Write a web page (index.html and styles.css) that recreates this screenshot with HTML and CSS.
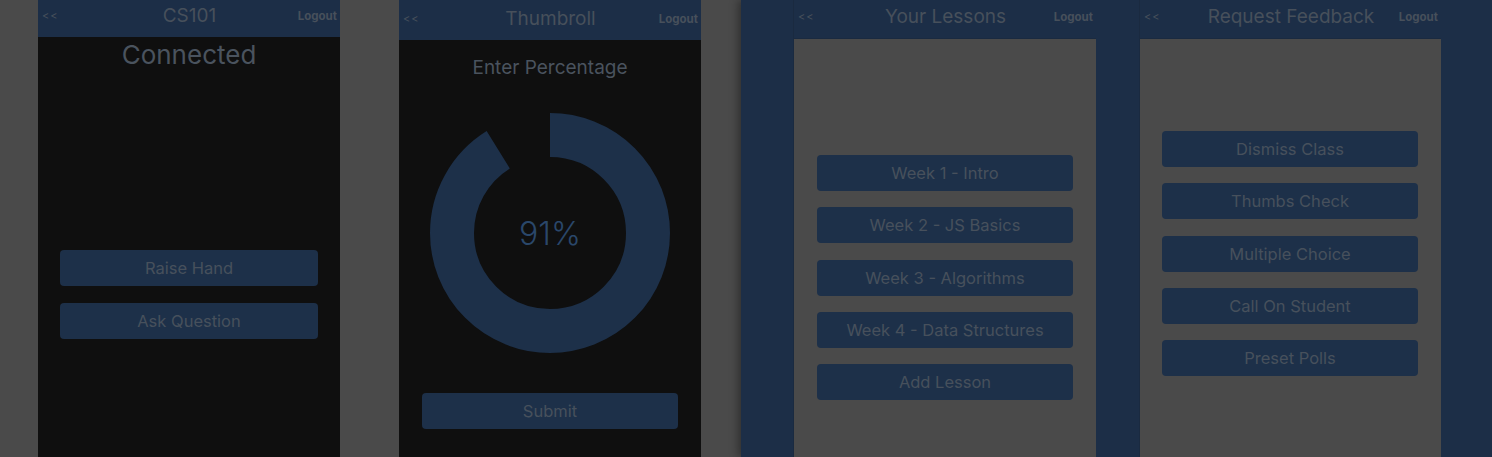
FILE: index.html
```html
<!DOCTYPE html>
<html>
<head>
<meta charset="utf-8">
<link rel="stylesheet" href="styles.css">
<title>Classroom app screens</title>
</head>
<body>
<div class="page">
  <section class="screen dark s1">
    <header class="bar bar-37">
      <span class="back">&lt;&lt;</span>
      <span class="title">CS101</span>
      <span class="logout">Logout</span>
    </header>
    <div class="status">Connected</div>
    <div class="btns btns-s1">
      <div class="btn">Raise Hand</div>
      <div class="btn">Ask Question</div>
    </div>
  </section>

  <section class="screen dark s2">
    <header class="bar bar-40">
      <span class="back">&lt;&lt;</span>
      <span class="title">Thumbroll</span>
      <span class="logout">Logout</span>
    </header>
    <div class="prompt">Enter Percentage</div>
    <div class="donut">
      <svg width="240" height="240" viewBox="0 0 240 240">
        <circle cx="120" cy="120" r="98" fill="none" stroke="#1d3049" stroke-width="44"
          stroke-dasharray="560.3 615.8" transform="rotate(-90 120 120)"/>
      </svg>
      <span class="pct">91%</span>
    </div>
    <div class="btns btns-s2">
      <div class="btn">Submit</div>
    </div>
  </section>

  <div class="panel">
    <section class="screen light s3">
      <header class="bar bar-39">
        <span class="back">&lt;&lt;</span>
        <span class="title">Your Lessons</span>
        <span class="logout">Logout</span>
      </header>
      <div class="btns btns-s3">
        <div class="btn">Week 1 - Intro</div>
        <div class="btn">Week 2 - JS Basics</div>
        <div class="btn">Week 3 - Algorithms</div>
        <div class="btn">Week 4 - Data Structures</div>
        <div class="btn">Add Lesson</div>
      </div>
    </section>
    <section class="screen light s4">
      <header class="bar bar-39">
        <span class="back">&lt;&lt;</span>
        <span class="title">Request Feedback</span>
        <span class="logout">Logout</span>
      </header>
      <div class="btns btns-s4">
        <div class="btn">Dismiss Class</div>
        <div class="btn">Thumbs Check</div>
        <div class="btn">Multiple Choice</div>
        <div class="btn">Call On Student</div>
        <div class="btn">Preset Polls</div>
      </div>
    </section>
  </div>
</div>
</body>
</html>
```

FILE: styles.css
```css
* { box-sizing: border-box; }
html, body {
  margin: 0;
  padding: 0;
  height: 457px;
  overflow: hidden;
  background: #4a4a4a;
  font-family: Inter, "Liberation Sans", sans-serif;
}
.page {
  display: flex;
  height: 457px;
  padding-left: 38px;
}
.screen {
  width: 302px;
  height: 457px;
  display: flex;
  flex-direction: column;
  flex-shrink: 0;
}
.dark { background: #0f0f0f; }
.light { background: #4a4a4a; }
.s1 { margin-right: 59px; }
.s2 { margin-right: 40px; }

.bar {
  display: grid;
  grid-template-columns: 1fr auto 1fr;
  align-items: center;
  background: #1c2e47;
  color: #47505b;
  padding: 0 3px 0 4px;
  flex-shrink: 0;
}
.bar-37 { height: 37px; padding-bottom: 6px; }
.bar-40 { height: 40px; padding-bottom: 3px; }
.bar-39 { height: 39px; padding-bottom: 5px; border-bottom: 1px solid #1a2a40; }
.back { font-size: 11px; letter-spacing: 1px; justify-self: start; }
.title { font-size: 19px; font-weight: 400; white-space: nowrap; }
.logout { font-size: 11.5px; font-weight: 700; justify-self: end; }

.status {
  color: #4a535e;
  font-size: 26px;
  line-height: 30px;
  text-align: center;
  margin-top: 3px;
}
.prompt {
  color: #4a535e;
  font-size: 19px;
  line-height: 24px;
  text-align: center;
  margin-top: 16px;
}
.donut {
  position: relative;
  width: 240px;
  height: 240px;
  margin: 33px auto 0;
}
.donut svg { display: block; }
.pct {
  position: absolute;
  inset: 0;
  display: flex;
  align-items: center;
  justify-content: center;
  color: #2a476a;
  font-size: 32px;
  font-weight: 300;
}

.btns { display: flex; flex-direction: column; }
.btn {
  height: 36px;
  border-radius: 4px;
  background: #1d3049;
  color: #47505c;
  font-size: 16.5px;
  display: flex;
  align-items: center;
  justify-content: center;
  white-space: nowrap;
}
.btns-s1 { margin: 180px 22px 0; gap: 17px; }
.btns-s2 { margin: 40px 23px 0; }
.btns-s3 { margin: 116px 23px 0; gap: 16.3px; }
.btns-s4 { margin: 92px 23px 0 22px; gap: 16.3px; }

.panel {
  flex: 1;
  display: flex;
  background: #1c2e47;
  padding-left: 52px;
  box-shadow: -3px 0 8px rgba(0,0,0,0.35);
}
.s3 { border-left: 1px solid #1a2a40; width: 303px; margin-right: 43px; }
.s4 { border-left: 1px solid #1a2a40; width: 302px; }
```
